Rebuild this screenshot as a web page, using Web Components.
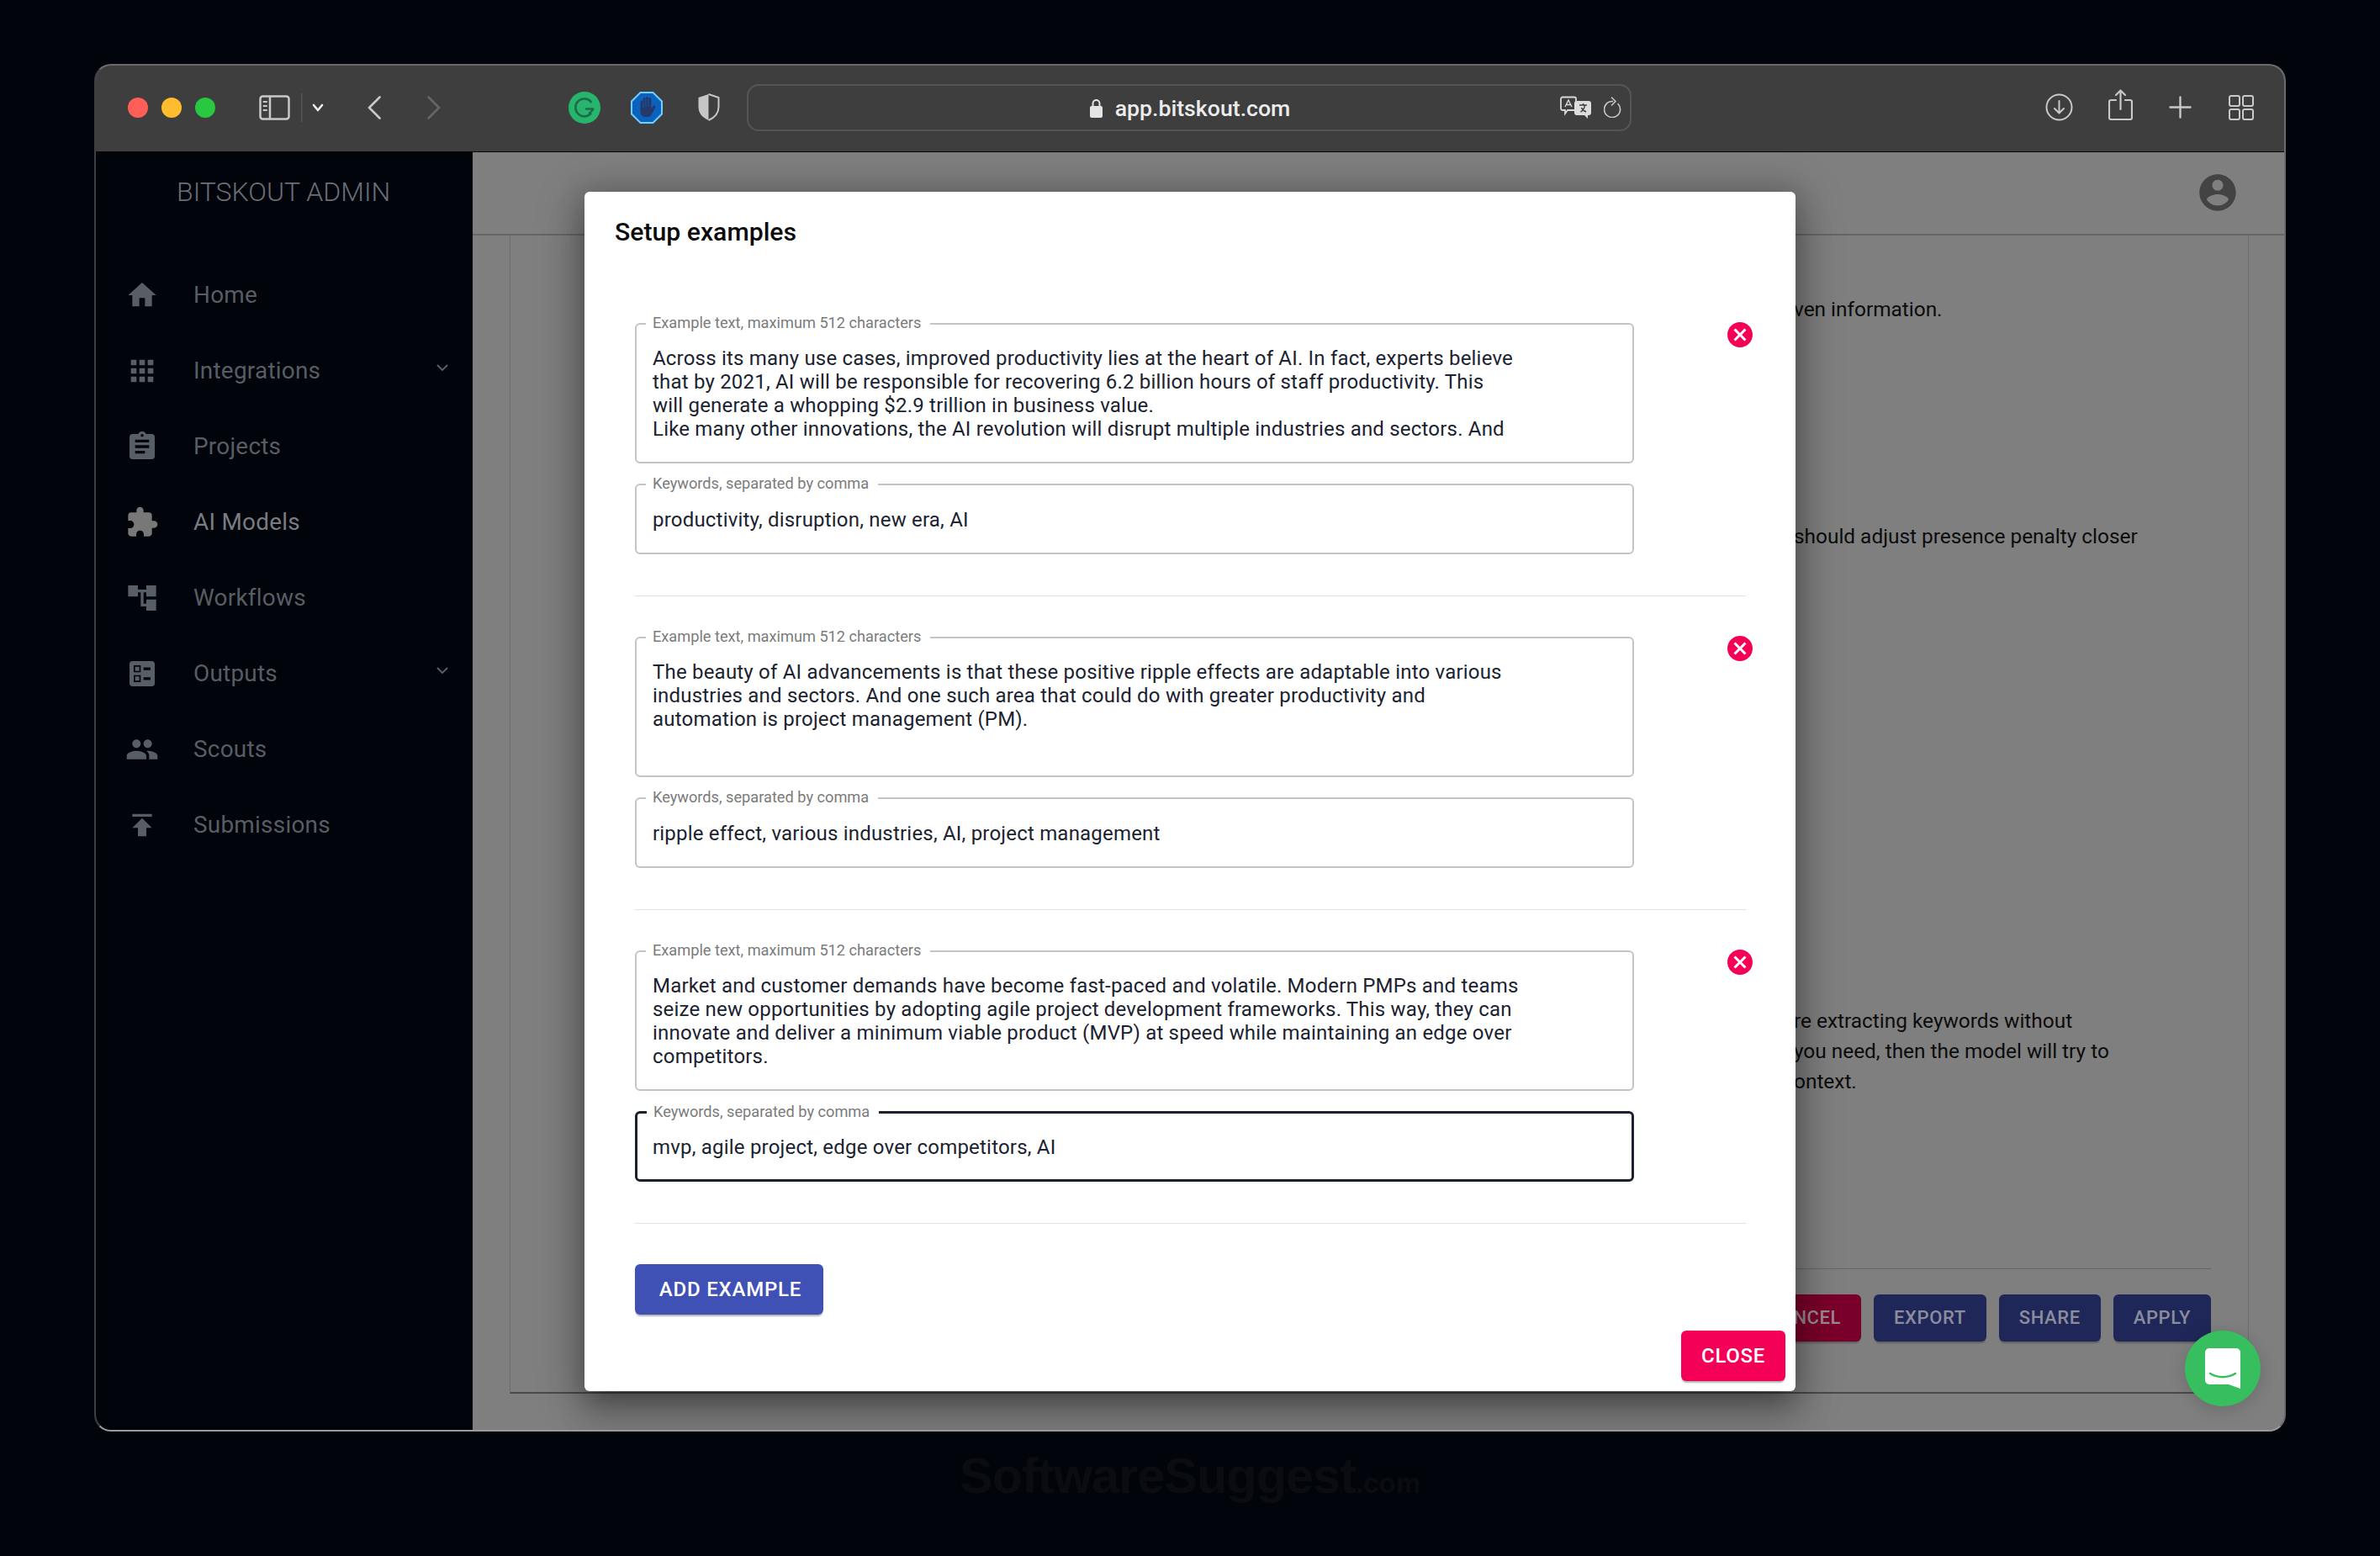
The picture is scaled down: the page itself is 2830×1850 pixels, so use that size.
<!DOCTYPE html>
<html>
<head>
<meta charset="utf-8">
<title>Setup examples</title>
<style>
  html, body { margin: 0; background: #01040a; }
  body { font-family: Roboto, "Liberation Sans", sans-serif; }
</style>
</head>
<body>
<app-desktop>
  <browser-window>
    <browser-toolbar slot="toolbar" url="app.bitskout.com"></browser-toolbar>
    <admin-sidebar slot="side" brand="BITSKOUT ADMIN">
      <nav-item icon="home">Home</nav-item>
      <nav-item icon="apps" expandable>Integrations</nav-item>
      <nav-item icon="assignment">Projects</nav-item>
      <nav-item icon="extension" active>AI Models</nav-item>
      <nav-item icon="tree">Workflows</nav-item>
      <nav-item icon="ballot" expandable>Outputs</nav-item>
      <nav-item icon="people">Scouts</nav-item>
      <nav-item icon="publish">Submissions</nav-item>
    </admin-sidebar>
    <admin-page slot="main">
      <p style="margin-top:70px">ven information.</p>
      <p style="margin-top:234px">should adjust presence penalty closer</p>
      <p style="margin-top:540px">re extracting keywords without<br>you need, then the model will try to<br>ontext.</p>
    </admin-page>
    <setup-dialog slot="overlay" heading="Setup examples">
      <example-block keywords="productivity, disruption, new era, AI">Across its many use cases, improved productivity lies at the heart of AI. In fact, experts believe<br>that by 2021, AI will be responsible for recovering 6.2 billion hours of staff productivity. This<br>will generate a whopping $2.9 trillion in business value.<br>Like many other innovations, the AI revolution will disrupt multiple industries and sectors. And</example-block>
      <example-block keywords="ripple effect, various industries, AI, project management">The beauty of AI advancements is that these positive ripple effects are adaptable into various<br>industries and sectors. And one such area that could do with greater productivity and<br>automation is project management (PM).</example-block>
      <example-block keywords="mvp, agile project, edge over competitors, AI" focused>Market and customer demands have become fast-paced and volatile. Modern PMPs and teams<br>seize new opportunities by adopting agile project development frameworks. This way, they can<br>innovate and deliver a minimum viable product (MVP) at speed while maintaining an edge over<br>competitors.</example-block>
    </setup-dialog>
    <chat-fab slot="overlay-fab"></chat-fab>
  </browser-window>
</app-desktop>

<script>
// material icons, 24 x 24 viewBox
const ICONS = {
  home: 'M10 20v-6h4v6h5v-8h3L12 3 2 12h3v8z',
  apps: 'M4 8h4V4H4v4zm6 12h4v-4h-4v4zm-6 0h4v-4H4v4zm0-6h4v-4H4v4zm6 0h4v-4h-4v4zm6-10v4h4V4h-4zm-6 4h4V4h-4v4zm6 6h4v-4h-4v4zm0 6h4v-4h-4v4z',
  assignment: 'M19 3h-4.18C14.4 1.84 13.3 1 12 1c-1.3 0-2.4.84-2.82 2H5c-1.1 0-2 .9-2 2v14c0 1.1.9 2 2 2h14c1.1 0 2-.9 2-2V5c0-1.1-.9-2-2-2zm-7 0c.55 0 1 .45 1 1s-.45 1-1 1-1-.45-1-1 .45-1 1-1zm2 14H7v-2h7v2zm3-4H7v-2h10v2zm0-4H7V7h10v2z',
  extension: 'M20.5 11H19V7c0-1.1-.9-2-2-2h-4V3.5C13 2.12 11.88 1 10.5 1S8 2.12 8 3.5V5H4c-1.1 0-1.99.9-1.99 2v3.8H3.5c1.49 0 2.7 1.21 2.7 2.7s-1.21 2.7-2.7 2.7H2V20c0 1.1.9 2 2 2h3.8v-1.5c0-1.49 1.21-2.7 2.7-2.7 1.49 0 2.7 1.21 2.7 2.7V22H17c1.1 0 2-.9 2-2v-4h1.5c1.38 0 2.5-1.12 2.5-2.5S21.88 11 20.5 11z',
  tree: 'M22 11V3h-7v3H9V3H2v8h7V8h2v10h4v3h7v-8h-7v3h-2V8h2v3z',
  ballot: 'M13 9.5h5v-2h-5v2zm0 7h5v-2h-5v2zm6 4.5H5c-1.1 0-2-.9-2-2V5c0-1.1.9-2 2-2h14c1.1 0 2 .9 2 2v14c0 1.1-.9 2-2 2zM6 11h5V6H6v5zm1-4h3v3H7V7zM6 18h5v-5H6v5zm1-4h3v3H7v-3z',
  people: 'M16 11c1.66 0 2.99-1.34 2.99-3S17.66 5 16 5c-1.66 0-3 1.34-3 3s1.34 3 3 3zm-8 0c1.66 0 2.99-1.34 2.99-3S9.66 5 8 5C6.34 5 5 6.34 5 8s1.34 3 3 3zm0 2c-2.33 0-7 1.17-7 3.5V19h14v-2.5c0-2.33-4.67-3.5-7-3.5zm8 0c-.29 0-.62.02-.97.05 1.16.84 1.97 1.97 1.97 3.45V19h6v-2.5c0-2.33-4.67-3.5-7-3.5z',
  publish: 'M5 4v2h14V4H5zm0 10h4v6h6v-6h4l-7-7-7 7z',
  account: 'M12 2C6.48 2 2 6.48 2 12s4.48 10 10 10 10-4.48 10-10S17.52 2 12 2zm0 3c1.66 0 3 1.34 3 3s-1.34 3-3 3-3-1.34-3-3 1.34-3 3-3zm0 14.2c-2.5 0-4.71-1.28-6-3.22.03-1.99 4-3.08 6-3.08 1.99 0 5.97 1.09 6 3.08-1.29 1.94-3.5 3.22-6 3.22z',
  cancel: 'M12 2C6.47 2 2 6.47 2 12s4.47 10 10 10 10-4.47 10-10S17.53 2 12 2zm5 13.59L15.59 17 12 13.41 8.41 17 7 15.59 10.59 12 7 8.41 8.41 7 12 10.59 15.59 7 17 8.41 13.41 12 17 15.59z'
};
const icon = (name, size, color) =>
  `<svg width="${size}" height="${size}" viewBox="0 0 24 24" fill="${color}" fill-rule="evenodd" style="display:block;flex:none"><path d="${ICONS[name]}"/></svg>`;

class AppDesktop extends HTMLElement {
  constructor() {
    super();
    this.attachShadow({ mode: 'open' }).innerHTML = `
      <style>
        :host { display: flex; flex-direction: column; align-items: center; box-sizing: border-box; width: 2830px; height: 1850px; padding-top: 76px; overflow: hidden; background: #01040a; }
        .mark { margin-top: 19px; font: 700 59.500px/68px "Liberation Sans", sans-serif; letter-spacing: -1px; color: #0a0c11; }
        .mark small { font-size: 33px; letter-spacing: 0; }
      </style>
      <slot></slot>
      <div class="mark">SoftwareSuggest<small>.com</small></div>`;
  }
}

class BrowserWindow extends HTMLElement {
  constructor() {
    super();
    this.attachShadow({ mode: 'open' }).innerHTML = `
      <style>
        :host { display: flex; flex-direction: column; position: relative; box-sizing: border-box; flex: none; width: 2606px; height: 1626px; overflow: hidden; border-radius: 20px; border: 2px solid #6b6b6b; border-bottom-color: #9a9a9a; border-left-color: #3c3f42; background: #7f7f7f; }
        .body { flex: 1; display: flex; min-height: 0; }
        .overlay { position: absolute; left: 0; right: 0; top: 104px; bottom: 0; display: flex; align-items: center; justify-content: center; }
        ::slotted([slot=overlay-fab]) { position: absolute; right: 28px; bottom: 28px; }
      </style>
      <slot name="toolbar"></slot>
      <div class="body"><slot name="side"></slot><slot name="main"></slot></div>
      <div class="overlay"><slot name="overlay"></slot></div>
      <slot name="overlay-fab"></slot>`;
  }
}

class BrowserToolbar extends HTMLElement {
  connectedCallback() {
    const url = this.getAttribute('url');
    const line = 'fill="none" stroke="#c9c9c9" stroke-linecap="round" stroke-linejoin="round"';
    this.attachShadow({ mode: 'open' }).innerHTML = `
      <style>
        :host { display: flex; align-items: center; box-sizing: border-box; flex: none; height: 103px; padding: 0 0 3px 38px; background: #3e3e3e; border-bottom: 1px solid #050505; }
        .dots { display: flex; gap: 16px; }
        .dots i { width: 24px; height: 24px; border-radius: 50%; }
        svg { display: block; flex: none; }
        .url { box-sizing: border-box; display: grid; grid-template-columns: 1fr auto 1fr; align-items: center; flex: none; width: 1052px; height: 56px; margin-left: 32px; border: 2px solid #555; border-radius: 14px; }
        .addr { grid-column: 2; display: flex; align-items: center; gap: 15px; margin-left: 2px; padding-top: 2px; color: #ececec; font: 500 26.700px/34px Roboto, sans-serif; }
        .end { grid-column: 3; justify-self: end; display: flex; align-items: center; gap: 15px; padding-right: 10px; }
      </style>
      <div class="dots"><i style="background:#ff5f57"></i><i style="background:#febc2e"></i><i style="background:#28c840"></i></div>
      <svg style="margin-left:52px" width="37" height="30" viewBox="0 0 37 30" ${line} stroke-width="2.5"><rect x="1.5" y="1.5" width="34" height="27" rx="3"/><path d="M13 2v26"/><path d="M5.500 8h3.500M5.500 13h3.500M5.500 18h3.500" stroke-width="2"/></svg>
      <svg style="margin-left:13px" width="2" height="34" viewBox="0 0 2 34"><rect width="1.5" height="34" fill="#555"/></svg>
      <svg style="margin-left:11px" width="14" height="10" viewBox="0 0 14 10" fill="none" stroke="#eee" stroke-width="2.600" stroke-linecap="round" stroke-linejoin="round"><path d="M2 2l5 6 5-6"/></svg>
      <svg style="margin-left:52px" width="16" height="28" viewBox="0 0 16 28" ${line} stroke-width="2.600"><path d="M14.500 1.500L2 14l12.500 12.500"/></svg>
      <svg style="margin-left:55px" width="16" height="28" viewBox="0 0 16 28" fill="none" stroke="#666" stroke-width="2.600" stroke-linecap="round" stroke-linejoin="round"><path d="M1.500 1.500L14 14 1.500 26.500"/></svg>
      <svg style="margin-left:152px" width="38" height="38" viewBox="0 0 38 38"><circle cx="19" cy="19" r="19" fill="#27b56e"/><path d="M27.500 13A10.500 10.500 0 1 0 27 25.500" fill="none" stroke="#1d6b49" stroke-width="2.600"/><path d="M20 20.500h10M30 20.500l-6 6" fill="none" stroke="#1d6b49" stroke-width="2.400"/></svg>
      <svg style="margin-left:36px" width="38" height="38" viewBox="0 0 38 38"><path d="M11.500 1h15L37 11.500v15L26.500 37h-15L1 26.500v-15z" fill="#0b62bd" stroke="#6fd0ff" stroke-width="2"/><path d="M11.500 21v-9a1.600 1.600 0 0 1 3.200 0V8.500a1.600 1.600 0 0 1 3.200 0V7.500a1.600 1.600 0 0 1 3.200 0v1a1.600 1.600 0 0 1 3.200 0V20l2.300-3a1.600 1.600 0 0 1 2.600 1.900l-4.300 8.100c-1 2-2.600 3-5 3h-2.400c-3.500 0-6-2.500-6-6z" fill="#24396a"/><path d="M14.800 12v7M17.900 8.500V18M21 8.500V18" stroke="#0b62bd" stroke-width=".8"/></svg>
      <svg style="margin-left:41px" width="27" height="33" viewBox="0 0 27 33"><path d="M13.500 1L1.500 5V16c0 8 5 13 12 16z" fill="#c6c6c6"/><path d="M13.500 1l12 4V16c0 8-5 13-12 16" fill="none" stroke="#c6c6c6" stroke-width="2" stroke-linejoin="round"/></svg>
      <div class="url">
        <div class="addr">
          <svg width="15" height="23" viewBox="0 0 15 23"><path d="M3.500 10V6a4 4 0 0 1 8 0v4" fill="none" stroke="#e4e4e4" stroke-width="2"/><rect y="9" width="15" height="14" rx="2" fill="#e4e4e4"/></svg>
          <span>${url}</span>
        </div>
        <div class="end">
          <svg width="37" height="27" viewBox="0 0 37 27"><path d="M3 1.500h14a2 2 0 0 1 2 2V15a2 2 0 0 1-2 2H9l-3 4v-4H3a2 2 0 0 1-2-2V3.500a2 2 0 0 1 2-2z" fill="#3e3e3e" stroke="#d8d8d8" stroke-width="1.800"/><path d="M6 13l4-8 4 8M7.500 10.500h5" fill="none" stroke="#d8d8d8" stroke-width="1.400"/><path d="M20 6h14a3 3 0 0 1 3 3v11a3 3 0 0 1-3 3h-1v4l-4-4h-9a3 3 0 0 1-3-3V9a3 3 0 0 1 3-3z" fill="#dcdcdc"/><path d="M23 11h9M27.500 9v2M24.500 19c3-1.500 4.500-4 5-8M25.500 14c1 2.500 3 4 5.500 5" fill="none" stroke="#3e3e3e" stroke-width="1.500"/></svg>
          <svg width="21" height="25" viewBox="0 0 21 25" ${line} stroke-width="1.600"><path d="M17 8.500A9.500 9.500 0 1 1 10.500 5.500"/><path d="M9.500 1l4.500 4.500L9.500 10"/></svg>
        </div>
      </div>
      <svg style="margin-left:492px" width="33" height="33" viewBox="0 0 33 33" ${line} stroke-width="2"><circle cx="16.500" cy="16.500" r="15"/><path d="M16.500 9v14M11 18l5.500 5.500L22 18"/></svg>
      <svg style="margin-left:42px;margin-top:-5px" width="29" height="38" viewBox="0 0 29 38" ${line} stroke-width="2.200"><path d="M9 13H3a2 2 0 0 0-2 2v19a2 2 0 0 0 2 2h23a2 2 0 0 0 2-2V15a2 2 0 0 0-2-2h-6"/><path d="M14.500 24V2M9 7l5.500-5.500L20 7"/></svg>
      <svg style="margin-left:43px" width="27" height="27" viewBox="0 0 27 27" ${line} stroke-width="2.400"><path d="M13.500 1.500v24M1.500 13.500h24"/></svg>
      <svg style="margin-left:44px" width="30" height="30" viewBox="0 0 30 30" fill="none" stroke="#c9c9c9" stroke-width="2"><rect x="1" y="1" width="12" height="12" rx="2"/><rect x="17" y="1" width="12" height="12" rx="2"/><rect x="1" y="17" width="12" height="12" rx="2"/><rect x="17" y="17" width="12" height="12" rx="2"/></svg>`;
  }
}

class AdminSidebar extends HTMLElement {
  connectedCallback() {
    this.attachShadow({ mode: 'open' }).innerHTML = `
      <style>
        :host { display: flex; flex-direction: column; box-sizing: border-box; flex: none; width: 448px; background: #01040a; }
        .brand { height: 94px; padding: 0 0 0 96px; margin-bottom: 31px; font: 300 32px/94px Roboto, sans-serif; color: #6a6f76; white-space: nowrap; }
      </style>
      <div class="brand">${this.getAttribute('brand')}</div>
      <slot></slot>`;
  }
}

class NavItem extends HTMLElement {
  connectedCallback() {
    const active = this.hasAttribute('active');
    const color = active ? '#787878' : '#585e65';
    this.attachShadow({ mode: 'open' }).innerHTML = `
      <style>
        :host { display: flex; align-items: center; height: 90px; padding: 0 28px 0 35px; color: ${active ? '#797c81' : '#585d64'}; font: 400 27.900px/32px Roboto, sans-serif; letter-spacing: .25px; }
        span { flex: 1; margin-left: 41px; }
        svg.chev { margin-top: -9px; }
      </style>
      ${icon(this.getAttribute('icon'), 40, color)}
      <span><slot></slot></span>
      ${this.hasAttribute('expandable') ? '<svg class="chev" width="16" height="10" viewBox="0 0 16 10" fill="none" stroke="#5d6269" stroke-width="1.800"><path d="M2 2l6 6 6-6"/></svg>' : ''}`;
  }
}

class AdminPage extends HTMLElement {
  constructor() {
    super();
    this.attachShadow({ mode: 'open' }).innerHTML = `
      <style>
        :host { display: flex; flex-direction: column; flex: 1; min-width: 0; font-family: Roboto, sans-serif; }
        header { flex: none; display: flex; justify-content: flex-end; align-items: center; box-sizing: border-box; height: 99px; padding: 0 53px 2px 0; border-bottom: 2px solid #666; }
        .card { box-sizing: border-box; height: 1377px; margin: 0 42px 0 44px; border-left: 1.500px solid #6e6e6e; border-right: 1.500px solid #6e6e6e; border-bottom: 2px solid #4a4a4a; display: flex; flex-direction: column; }
        .copy { flex: 1; padding-left: 1526px; color: #0c0c0c; font-size: 24.400px; line-height: 36px; white-space: nowrap; }
        ::slotted(p) { margin-bottom: 0; }
        .bar { flex: none; margin: 0 44px 0 200px; border-top: 1.500px solid #666; display: flex; justify-content: flex-end; gap: 15px; padding: 30px 0 60px; }
        .btn { display: flex; align-items: center; height: 56px; padding: 0 24px; border-radius: 6px; font: 500 22px/28px Roboto, sans-serif; letter-spacing: .6px; color: #8b8d9d; background: #1f2759; box-shadow: 0 3px 2px -1px rgba(0,0,0,.25); }
        .btn.red { background: #7a002b; color: #9b8a92; }
      </style>
      <header>${icon('account', 52, '#434343')}</header>
      <div class="card">
        <div class="copy"><slot></slot></div>
        <div class="bar">
          <div class="btn red">CANCEL</div>
          <div class="btn">EXPORT</div>
          <div class="btn">SHARE</div>
          <div class="btn">APPLY</div>
        </div>
      </div>`;
  }
}

class SetupDialog extends HTMLElement {
  connectedCallback() {
    this.attachShadow({ mode: 'open' }).innerHTML = `
      <style>
        :host { display: flex; flex-direction: column; position: relative; box-sizing: border-box; flex: none; width: 1440px; height: 1426px; background: #fff; border-radius: 6px; font-family: Roboto, sans-serif; box-shadow: 0 18px 25px -11px rgba(0,0,0,.24), 0 30px 44px 5px rgba(0,0,0,.14), 0 8px 50px 14px rgba(0,0,0,.16), 0 0 30px 4px rgba(0,0,0,.1); }
        h2 { margin: 28px 36px 88px; font: 500 30.200px/40px Roboto, sans-serif; color: #0b0b0b; }
        .body { padding: 0 59px 0 60px; }
        .add, .close { display: flex; align-items: center; justify-content: center; box-sizing: border-box; border-radius: 6px; color: #fff; font: 500 24px/28px Roboto, sans-serif; letter-spacing: .67px; box-shadow: 0 3px 2px -1px rgba(0,0,0,.3); }
        .add { width: 224px; height: 60px; background: #3f51b5; letter-spacing: .8px; padding-left: 3px; }
        .close { position: absolute; right: 12px; bottom: 12px; width: 124px; height: 60px; background: #f50057; }
      </style>
      <h2>${this.getAttribute('heading')}</h2>
      <div class="body">
        <slot></slot>
        <div class="add">ADD EXAMPLE</div>
      </div>
      <div class="close">CLOSE</div>`;
  }
}

class ExampleBlock extends HTMLElement {
  connectedCallback() {
    this.attachShadow({ mode: 'open' }).innerHTML = `
      <style>
        :host { display: block; box-sizing: border-box; height: 373px; }
        .wrap { display: flex; align-items: flex-start; height: 324px; border-bottom: 1.500px solid #e2e2e2; }
        .fields { flex: none; width: 1188px; display: flex; flex-direction: column; gap: 24px; }
        svg { margin: -4px 0 0 108px; }
      </style>
      <div class="wrap">
        <div class="fields">
          <outlined-field label="Example text, maximum 512 characters" height="167"><slot></slot></outlined-field>
          <outlined-field label="Keywords, separated by comma" height="84" single ${this.hasAttribute('focused') ? 'focused' : ''}>${this.getAttribute('keywords')}</outlined-field>
        </div>
        ${icon('cancel', 36, '#f50057')}
      </div>`;
  }
}

class OutlinedField extends HTMLElement {
  connectedCallback() {
    const focused = this.hasAttribute('focused');
    const single = this.hasAttribute('single');
    const padX = focused ? 18 : 19;
    this.attachShadow({ mode: 'open' }).innerHTML = `
      <style>
        :host { display: block; position: relative; box-sizing: border-box; height: ${this.getAttribute('height')}px; padding: ${single ? `1px ${padX}px 0` : `26px ${padX}px 0`}; border: ${focused ? '3px solid #1a202c' : '2px solid #c4c4c4'}; border-radius: 6px; color: #1b2230; font: 400 24px/28px Roboto, sans-serif; letter-spacing: .2px; white-space: nowrap; ${single ? 'display:flex;align-items:center;' : ''} }
        label { position: absolute; left: 11px; top: -12px; padding: 0 11px 0 8px; background: #fff; color: #7b7b7b; font-size: 18.200px; line-height: 20px; letter-spacing: 0; }
      </style>
      <label>${this.getAttribute('label')}</label>
      <div><slot></slot></div>`;
  }
}

class ChatFab extends HTMLElement {
  constructor() {
    super();
    this.attachShadow({ mode: 'open' }).innerHTML = `
      <style>
        :host { display: flex; align-items: center; justify-content: center; width: 90px; height: 90px; border-radius: 50%; background: #37be5e; box-shadow: 0 4px 22px rgba(0,0,0,.16); }
      </style>
      <svg width="42" height="48" viewBox="0 0 42 48"><path d="M5 0h32a5 5 0 0 1 5 5v43l-14-5H5a5 5 0 0 1-5-5V5a5 5 0 0 1 5-5z" fill="#fff"/><path d="M6 30c9 5.500 21 5.500 30 0" fill="none" stroke="#37be5e" stroke-width="2.500" stroke-linecap="round"/></svg>`;
  }
}

customElements.define('app-desktop', AppDesktop);
customElements.define('browser-window', BrowserWindow);
customElements.define('browser-toolbar', BrowserToolbar);
customElements.define('admin-sidebar', AdminSidebar);
customElements.define('nav-item', NavItem);
customElements.define('admin-page', AdminPage);
customElements.define('setup-dialog', SetupDialog);
customElements.define('example-block', ExampleBlock);
customElements.define('outlined-field', OutlinedField);
customElements.define('chat-fab', ChatFab);
</script>
</body>
</html>
